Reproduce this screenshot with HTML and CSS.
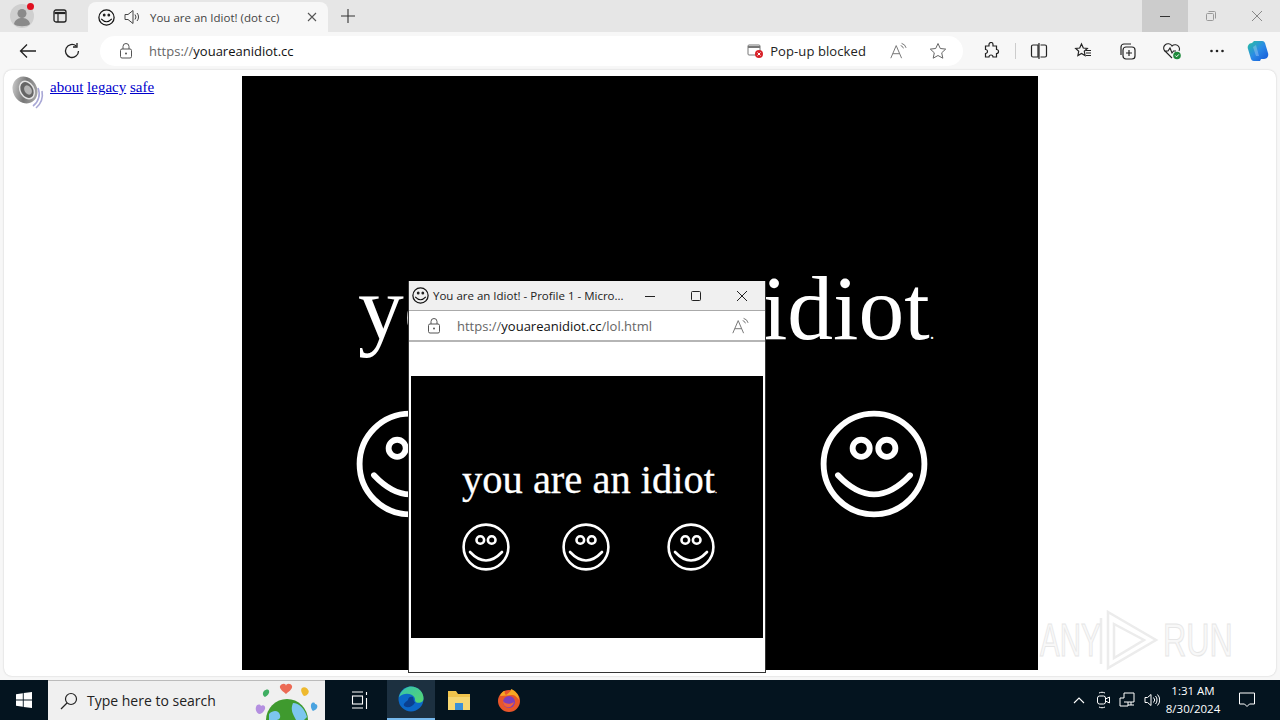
FILE: index.html
```html
<!DOCTYPE html>
<html lang="en">
<head>
	<meta charset="UTF-8">
	<title>You are an Idiot! (dot cc)</title>
	<link rel="stylesheet" href="styles.css">
</head>
<body>
	<svg class="defs" width="0" height="0">
		<symbol id="smile" viewBox="0 0 48 48">
			<g fill="none" stroke="currentColor" stroke-width="2.6" stroke-linecap="round">
				<circle cx="24" cy="24" r="22.4"/>
				<circle cx="18.3" cy="17" r="3.8"/>
				<circle cx="29.7" cy="17" r="3.8"/>
				<path d="M8 29Q24 46 40 29"/>
			</g>
		</symbol>
		<symbol id="smile-small" viewBox="0 0 48 48">
			<circle cx="24" cy="24" r="21.500" fill="none" stroke="#111" stroke-width="3.500"/>
			<ellipse cx="17.500" cy="17" rx="4" ry="4.500" fill="#222"/>
			<ellipse cx="30.500" cy="17" rx="4" ry="4.500" fill="#222"/>
			<path d="M9 28Q24 44 39 28" fill="none" stroke="#111" stroke-width="3.500"/>
		</symbol>
		<symbol id="lock" viewBox="0 0 16 16">
			<g fill="none" stroke="#555" stroke-width="1">
				<rect x="2.5" y="6" width="11" height="9" rx="1.5"/>
				<path d="M5 6V3.5a3 3 0 0 1 6 0V6"/>
			</g>
			<circle cx="8" cy="10.5" r="1" fill="#555"/>
		</symbol>
		<symbol id="read" viewBox="0 0 20 20">
			<g fill="none" stroke="#777" stroke-width="1.1">
				<path d="M2 18L8 4l6 14M4.2 13h7.6"/>
				<path d="M13 4a4 4 0 0 1 3 3M14 1.500a7 7 0 0 1 5 5"/>
			</g>
		</symbol>
	</svg>

	<div class="screen">
		<!-- tab strip -->
		<div class="tabstrip">
			<div class="profile">
				<svg width="24" height="24" viewBox="0 0 24 24"><circle cx="12" cy="12" r="12" fill="#cfcfcf"/><circle cx="12" cy="9.500" r="4.500" fill="#8a8a8a"/><path d="M4 20c1-5 5-6 8-6s7 1 8 6c-2 3-14 3-16 0z" fill="#8a8a8a"/></svg>
				<span class="profile-dot"></span>
			</div>
			<div class="strip-btn">
				<svg width="16" height="16" viewBox="0 0 16 16"><rect x="2" y="2" width="12" height="12" rx="2" fill="none" stroke="#222" stroke-width="1.300"/><path d="M2.500 5h11" stroke="#222" stroke-width="2.200"/><path d="M6 5v9" stroke="#222" stroke-width="1.200"/></svg>
			</div>
			<div class="tab">
				<svg class="tab-smile" width="17" height="17"><use href="#smile-small"/></svg>
				<svg class="tab-sound" width="17" height="16" viewBox="0 0 17 16"><g fill="none" stroke="#444" stroke-width="1"><path d="M1 5.500h3L9 1.500v13l-5-4H1z"/><path d="M11 5.500a4 4 0 0 1 0 5M13 4a6 6 0 0 1 0 8"/></g></svg>
				<span class="tab-title">You are an Idiot! (dot cc)</span>
				<svg class="tab-close" width="10" height="10" viewBox="0 0 10 10"><path d="M1 1l8 8M9 1l-8 8" stroke="#555" stroke-width="1.100"/></svg>
			</div>
			<svg class="newtab" width="16" height="16" viewBox="0 0 16 16"><path d="M8 1v14M1 8h14" stroke="#333" stroke-width="1.100"/></svg>
			<div class="winbtns">
				<div class="winbtn hover"><svg width="10" height="10" viewBox="0 0 10 10"><path d="M0 5.500h10" stroke="#333"/></svg></div>
				<div class="winbtn"><svg width="10" height="10" viewBox="0 0 10 10"><g fill="none" stroke="#999"><rect x=".5" y="2.500" width="7" height="7" rx="1"/><path d="M2.500 .5h6a1 1 0 0 1 1 1v6"/></g></svg></div>
				<div class="winbtn"><svg width="12" height="12" viewBox="0 0 12 12"><path d="M1 1l10 10M11 1L1 11" stroke="#888"/></svg></div>
			</div>
		</div>

		<!-- toolbar -->
		<div class="toolbar">
			<svg class="tool-back" width="18" height="16" viewBox="0 0 18 16"><path d="M17 8H1.500M8 1.500L1.500 8 8 14.500" fill="none" stroke="#222" stroke-width="1.300"/></svg>
			<svg class="tool-reload" width="18" height="18" viewBox="0 0 18 18"><g fill="none" stroke="#222" stroke-width="1.300"><path d="M15.500 9a6.500 6.500 0 1 1-2.200-4.900"/><path d="M14 1v4h-4"/></g></svg>
			<div class="omnibox">
				<svg class="omni-lock" width="16" height="16"><use href="#lock"/></svg>
				<span class="url"><i>https://</i>youareanidiot.cc</span>
				<span class="blocked">
					<svg width="17" height="16" viewBox="0 0 17 16"><rect x="1" y="2" width="12" height="10" rx="1" fill="none" stroke="#777"/><path d="M1 4h12" stroke="#777" stroke-width="2"/><circle cx="12" cy="11" r="4" fill="#d8232a"/><path d="M10.500 9.500l3 3M13.500 9.500l-3 3" stroke="#fff"/></svg>
					Pop-up blocked
				</span>
				<svg class="omni-read" width="18" height="18"><use href="#read"/></svg>
				<svg class="omni-star" width="18" height="18" viewBox="0 0 18 18"><path d="M9 1.500l2.300 5 5.400.6-4 3.700 1.100 5.400L9 13.500l-4.800 2.700 1.100-5.400-4-3.700 5.400-.6z" fill="none" stroke="#666"/></svg>
			</div>
			<div class="tools">
				<svg width="18" height="18" viewBox="0 0 18 18"><path d="M7 2.500a2 2 0 0 1 4 0V4h3.500v3.500a2 2 0 0 1 0 4V15H11a2 2 0 0 0-4 0H3.500v-3.500a2 2 0 0 0 0-4V4H7z" fill="none" stroke="#222" stroke-width="1.200"/></svg>
				<span class="tool-sep"></span>
				<svg width="18" height="18" viewBox="0 0 18 18"><g fill="none" stroke="#222" stroke-width="1.200"><path d="M8 3H3a1.500 1.500 0 0 0-1.500 1.500v9A1.500 1.500 0 0 0 3 15h5zM10.500 3H15a1.500 1.500 0 0 1 1.500 1.500v9A1.500 1.500 0 0 1 15 15h-4.500"/><path d="M9 1v16"/></g></svg>
				<svg width="18" height="18" viewBox="0 0 18 18"><g fill="none" stroke="#222" stroke-width="1.200"><path d="M7.500 2l1.800 4 4 .5-3 2.800.8 4.200-3.600-2-3.600 2 .8-4.200-3-2.800 4-.5z"/><path d="M12 8.500h5M12 11h5M12 13.500h5"/></g></svg>
				<svg width="18" height="18" viewBox="0 0 18 18"><g fill="none" stroke="#222" stroke-width="1.200"><rect x="5" y="5" width="12" height="12" rx="3"/><path d="M3 13V5a3 3 0 0 1 3-3h7M11 8v6M8 11h6"/></g></svg>
				<svg width="20" height="18" viewBox="0 0 20 18"><path d="M10 16L3 9a4 4 0 0 1 0-6 4.500 4.500 0 0 1 7 1 4.500 4.500 0 0 1 7 1 4 4 0 0 1 0 4M2 9h4l2-3 2 5 1.500-2H14" fill="none" stroke="#222" stroke-width="1.100"/><circle cx="15" cy="13.500" r="3.800" fill="#1f8a3b"/><path d="M13.300 13.500l1.300 1.300 2.200-2.400" fill="none" stroke="#fff"/></svg>
				<svg width="18" height="18" viewBox="0 0 18 18"><g fill="#222"><circle cx="3.500" cy="9" r="1.300"/><circle cx="9" cy="9" r="1.300"/><circle cx="14.500" cy="9" r="1.300"/></g></svg>
				<svg class="copilot" width="24" height="24" viewBox="0 0 24 24"><defs><linearGradient id="cop" x1="0" y1="0" x2="1" y2="1"><stop offset="0" stop-color="#29c3a0"/><stop offset=".5" stop-color="#2a8ae6"/><stop offset="1" stop-color="#1456d8"/></linearGradient></defs><path d="M8 2h8a3 3 0 0 1 3 2l3 10c1 3-1 6-4 6h-3l-1 2H8a3 3 0 0 1-3-2L2 10C1 7 3 4 6 4z" fill="url(#cop)"/><path d="M10 6l3 11h-3L7 8z" fill="#fff" opacity=".25"/></svg>
			</div>
		</div>

		<!-- page -->
		<div class="page">
			<div class="corner">
				<svg width="34" height="34" viewBox="0 0 34 34"><defs><linearGradient id="spk" x1="0" y1="0" x2="1" y2="1"><stop offset="0" stop-color="#e4e4e4"/><stop offset=".5" stop-color="#777"/><stop offset="1" stop-color="#bbb"/></linearGradient></defs><g fill="none" stroke="#a9a8d6" stroke-width="1.600"><path d="M26 12a15 15 0 0 1-5 18M30 15a18 18 0 0 1-6 17"/></g><ellipse cx="13" cy="14" rx="12" ry="14" fill="url(#spk)" transform="rotate(-30 13 14)"/><ellipse cx="15" cy="14" rx="7.500" ry="10" fill="#e4e4e4" transform="rotate(-30 15 14)"/><ellipse cx="15" cy="14" rx="6" ry="8.500" fill="#666" transform="rotate(-30 15 14)"/><ellipse cx="16" cy="14" rx="3.500" ry="5" fill="#b5b5b5" transform="rotate(-30 16 14)"/></svg>
				<div class="links"><a href="#">about</a> <a href="#">legacy</a> <a href="#">safe</a></div>
			</div>

			<div class="stage">
				<div class="stage-text">you are an idiot<small>.</small></div>
				<div class="faces">
					<svg width="108" height="108"><use href="#smile"/></svg>
					<svg width="108" height="108"><use href="#smile"/></svg>
					<svg width="108" height="108"><use href="#smile"/></svg>
				</div>
			</div>

			<!-- popup window -->
			<div class="popup">
				<div class="popup-title">
					<svg width="17" height="17"><use href="#smile-small"/></svg>
					<span class="popup-name">You are an Idiot! - Profile 1 - Micro...</span>
					<svg class="popup-min" width="10" height="10" viewBox="0 0 10 10"><path d="M0 5.500h10" stroke="#222"/></svg>
					<svg class="popup-max" width="10" height="10" viewBox="0 0 10 10"><rect x=".5" y=".5" width="9" height="9" rx="1" fill="none" stroke="#222"/></svg>
					<svg class="popup-close" width="12" height="12" viewBox="0 0 12 12"><path d="M1 1l10 10M11 1L1 11" stroke="#222"/></svg>
				</div>
				<div class="popup-addr">
					<svg width="16" height="16"><use href="#lock"/></svg>
					<span class="popup-url"><i>https://</i>youareanidiot.cc<i>/lol.html</i></span>
					<svg class="popup-read" width="18" height="18"><use href="#read"/></svg>
				</div>
				<div class="popup-body">
					<div class="mini">
						<div class="mini-text">you are an idiot<small>.</small></div>
						<div class="mini-faces">
							<svg width="48" height="48"><use href="#smile"/></svg>
							<svg width="48" height="48"><use href="#smile"/></svg>
							<svg width="48" height="48"><use href="#smile"/></svg>
						</div>
					</div>
				</div>
			</div>

			<!-- watermark -->
			<div class="mark">
				<span class="mark-word any">ANY</span>
				<svg width="62" height="64" viewBox="0 0 62 64"><g fill="none" stroke="#ececec" stroke-width="2.500"><path d="M3 10v46M10 4l48 28-48 28z"/><path d="M16 16l30 16-30 18z"/></g></svg>
				<span class="mark-word run">RUN</span>
			</div>
		</div>

		<!-- taskbar -->
		<div class="taskbar">
			<div class="start">
				<svg width="16" height="16" viewBox="0 0 16 16"><path d="M0 2.200L6.800 1.200v6.400H0zM7.700 1.100L16 0v7.600H7.700zM0 8.400h6.800v6.400L0 13.800zM7.700 8.400H16V16l-8.300-1.100z" fill="#fff"/></svg>
			</div>
			<div class="search">
				<svg width="18" height="18" viewBox="0 0 18 18"><g fill="none" stroke="#222" stroke-width="1.200"><circle cx="11" cy="7" r="5.500"/><path d="M7 11l-6 6"/></g></svg>
				<span class="search-text">Type here to search</span>
				<svg class="search-art" width="70" height="39" viewBox="0 0 70 39"><circle cx="32" cy="39" r="21" fill="#3f9a2e"/><path d="M14 33c5-5 10-3 11 1s-2 5-4 5h-7zM38 22c6 0 12 6 14 14l-3 3h-8c-3-6-6-10-3-17z" fill="#7cc6ee"/><path d="M25 5c2-3 6-3 6 0 0-3 5-3 6 0 1 3-4 6-6 8-2-2-7-5-6-8z" fill="#ec6a55"/><path d="M9 10c2-2 5-2 5 0 1 2-2 5-4 6-2-1-3-4-1-6z" fill="#3fae62"/><path d="M47 7c2-2 6 0 6 2 2 1 0 6-4 6-2-2-4-6-2-8z" fill="#eeb92e"/><path d="M1 26c1-3 4-3 5-1 2-2 5 0 4 3-1 3-4 5-6 5-2-1-4-4-3-7z" fill="#b48fe0"/><path d="M57 22c2-1 3 0 3 1 2 0 3 2 2 4s-3 2-4 3c-2-2-3-6-1-8z" fill="#4aa3e0"/></svg>
			</div>
			<div class="task-icon view">
				<svg width="18" height="18" viewBox="0 0 18 18"><g fill="none" stroke="#fff" stroke-width="1.100"><path d="M1 1h11M1 17h11"/><rect x="1.500" y="5" width="10" height="8"/><path d="M15.500 1v3M15.500 7v11"/></g></svg>
			</div>
			<div class="task-icon active">
				<svg width="26" height="26" viewBox="0 0 26 26"><defs><linearGradient id="edge" x1="0" y1="0" x2="1" y2="1"><stop offset="0" stop-color="#35c1b0"/><stop offset="1" stop-color="#57d66e"/></linearGradient></defs><circle cx="13" cy="13" r="12.500" fill="#0c68c8"/><path d="M1 11C3 3 10 .5 13 .5c7 0 12.500 5 12.500 12 0 4-4 5-7 4-2-1-1-3-2-5-2-4-10-6-15.500-.5z" fill="url(#edge)"/><path d="M10 14c0-3 3-4 5-3 1 2 0 4 2 5.500-2 4-7 6-10 4-3-2 0-4 3-6.500z" fill="#0a3f8f"/></svg>
			</div>
			<div class="task-icon">
				<svg width="24" height="22" viewBox="0 0 24 22"><path d="M1 2h8l2 3h12v16H1z" fill="#f0c44c"/><path d="M1 8h22v13H1z" fill="#f6d772"/><path d="M8 14h8v7H8z" fill="#3a90d8"/></svg>
			</div>
			<div class="task-icon fox">
				<svg width="24" height="24" viewBox="0 0 24 24"><circle cx="12" cy="13" r="11" fill="#e8562a"/><path d="M3 8c1-3 3-5 5-5-1 2 0 3 1 4 2-2 5-3 5-6 5 2 8 6 8 11-2-3-4-5-7-5z" fill="#f6a623"/><circle cx="12" cy="14" r="6" fill="#7d3fbb"/><path d="M6 13c2 3 7 4 11 1-1 4-4 6-7 5-2 0-4-3-4-6z" fill="#f0613a"/></svg>
			</div>
			<div class="tray">
				<svg class="tray-up" width="12" height="8" viewBox="0 0 12 8"><path d="M1 7l5-5 5 5" fill="none" stroke="#fff" stroke-width="1.100"/></svg>
				<svg width="14" height="18" viewBox="0 0 14 18"><g fill="none" stroke="#fff"><rect x="1.500" y="5" width="8" height="8" rx="2"/><path d="M9.500 8l4-2v6l-4-2M3 2c2-1 4-1 6 0M3 16c2 1 4 1 6 0"/></g></svg>
				<svg width="16" height="16" viewBox="0 0 16 16"><g fill="none" stroke="#fff"><path d="M5 1h10v9H5M5 1v5H1v8h8v-4"/><path d="M9 13h6M12 10v3"/></g></svg>
				<svg width="16" height="14" viewBox="0 0 16 14"><g fill="none" stroke="#fff"><path d="M1 4.500h2.500L7 1.500v11l-3.500-3H1z"/><path d="M9.500 4.500a3.500 3.500 0 0 1 0 5M11.500 3a6 6 0 0 1 0 8M13.500 1.500a8 8 0 0 1 0 11"/></g></svg>
			</div>
			<div class="clock"><span>1:31 AM</span><span>8/30/2024</span></div>
			<div class="notify">
				<svg width="16" height="16" viewBox="0 0 16 16"><path d="M.5 1h15v11h-5L8 14.500 5.500 12h-5z" fill="none" stroke="#fff"/></svg>
			</div>
		</div>
	</div>
</body>
</html>
```
FILE: styles.css
```css
*{
	padding: 0;
	margin: 0;
	box-sizing: border-box;
}
body{
	width: 1280px;
	height: 720px;
	overflow: hidden;
	font-family: "Open Sans", "Noto Sans", sans-serif;
	background: #f7f7f7;
}
.defs{
	position: absolute;
}
i{
	font-style: normal;
	color: #666;
}
.screen{
	display: flex;
	flex-direction: column;
	height: 720px;
}
/*tab strip*/
.tabstrip{
	display: flex;
	align-items: center;
	height: 32px;
	background: #e6e6e6;
	padding-left: 10px;
}
.profile{
	position: relative;
	width: 24px;
	height: 24px;
}
.profile-dot{
	position: absolute;
	top: -1px;
	right: 0;
	width: 7px;
	height: 7px;
	border-radius: 50%;
	background: #e01020;
}
.strip-btn{
	display: flex;
	margin-left: 18px;
}
.tab{
	display: flex;
	align-items: center;
	width: 240px;
	height: 30px;
	margin: 2px 0 0 20px;
	padding: 0 11px 0 10px;
	background: #f7f7f7;
	border-radius: 8px 8px 0 0;
}
.tab-sound{
	margin-left: 9px;
}
.tab-title{
	margin-left: 9px;
	font-size: 11.5px;
	color: #444;
	white-space: nowrap;
}
.tab-close{
	margin-left: auto;
}
.newtab{
	margin-left: 12px;
}
.winbtns{
	display: flex;
	margin-left: auto;
	height: 32px;
}
.winbtn{
	display: flex;
	align-items: center;
	justify-content: center;
	width: 46px;
}
.winbtn.hover{
	background: #ccc;
}
/*toolbar*/
.toolbar{
	display: flex;
	align-items: center;
	height: 38px;
	padding: 2px 10px 2px 19px;
}
.toolbar > svg{
	flex-shrink: 0;
}
.tool-reload{
	margin-left: 26px;
}
.omnibox{
	display: flex;
	flex-shrink: 0;
	align-items: center;
	width: 863px;
	height: 30px;
	margin-left: 19px;
	padding: 0 16px 0 18px;
	background: #fff;
	border-radius: 15px;
}
.url{
	margin-left: 15px;
	font-size: 13px;
	color: #111;
}
.blocked{
	display: flex;
	align-items: center;
	gap: 6px;
	margin-left: auto;
	font-size: 13px;
	letter-spacing: .1px;
	color: #222;
}
.omni-read{
	margin-left: 23px;
}
.omni-star{
	margin-left: 22px;
}
.tools{
	display: flex;
	align-items: center;
	gap: 26px;
	margin-left: 19px;
}
.tool-sep{
	width: 1px;
	height: 16px;
	margin: 0 -11.5px;
	background: #ccc;
}
.copilot{
	margin-left: -6px;
}
/*page*/
.page{
	position: relative;
	height: 606px;
	margin: 0 4px;
	display: flex;
	background: #fff;
	border-radius: 8px;
	box-shadow: 0 0 2px rgba(0,0,0,.2);
}
.corner{
	display: flex;
	width: 238px;
	padding: 6px 0 0 8px;
}
.links{
	margin: 3px 0 0 4px;
	font-family: "Liberation Serif", serif;
	font-size: 15px;
}
.links a{
	color: #0000cc;
}
.stage{
	width: 796px;
	height: 594px;
	margin-top: 6px;
	padding: 187px 0 0 116px;
	background: #000;
	color: #fff;
	font-family: "Liberation Serif", serif;
}
.stage-text{
	font-size: 91.5px;
	line-height: 1;
	white-space: nowrap;
}
.stage-text small,.mini-text small{
	font-size: 20%;
}
.faces{
	display: flex;
	gap: 124px;
	margin: 55px 0 0 -2px;
}
/*popup window*/
.popup{
	position: absolute;
	left: 404px;
	top: 211px;
	width: 358px;
	height: 392px;
	display: flex;
	flex-direction: column;
	background: #fff;
	border: 1px solid #333;
	border-top: 0;
}
.popup-title{
	display: flex;
	align-items: center;
	height: 30px;
	padding-left: 3px;
	background: #f0f0f0;
	border-bottom: 1px solid #aaa;
	color: #222;
}
.popup-name{
	margin-left: 4px;
	font-size: 11.5px;
	white-space: nowrap;
}
.popup-min{
	margin-left: auto;
}
.popup-max{
	margin-left: 36px;
}
.popup-close{
	margin: 0 17px 0 35px;
}
.popup-addr{
	display: flex;
	align-items: center;
	height: 31px;
	padding: 0 16px 0 17px;
	border-bottom: 2px solid #b5b5b5;
}
.popup-url{
	margin-left: 15px;
	font-size: 13px;
	color: #111;
}
.popup-read{
	margin-left: auto;
}
.popup-body{
	flex: 1;
	padding: 34px 2px 0;
}
.mini{
	height: 262px;
	padding: 84px 0 0 51px;
	background: #000;
	color: #fff;
	font-family: "Liberation Serif", serif;
}
.mini-text{
	font-size: 40.5px;
	line-height: 1;
	white-space: nowrap;
	-webkit-text-stroke: .3px #fff;
}
.mini-faces{
	display: flex;
	gap: 52px;
	margin-top: 22px;
}
.mini-faces svg:last-child{
	margin-left: 5px;
}
/*watermark*/
.mark{
	position: absolute;
	left: 1036px;
	top: 538px;
	display: flex;
	align-items: center;
	height: 64px;
	pointer-events: none;
}
.mark-word{
	display: inline-block;
	width: 58px;
	font-family: "Liberation Sans", sans-serif;
	font-size: 46px;
	color: #f8f8f8;
	-webkit-text-stroke: 1px #e6e6e6;
	transform: scaleX(.64);
	transform-origin: left center;
	white-space: nowrap;
}
.mark-word.run{
	margin-left: 3px;
	transform: scaleX(.7);
}
/*taskbar*/
.taskbar{
	display: flex;
	align-items: stretch;
	height: 40px;
	margin-top: 4px;
	background: #04141f;
	color: #fff;
}
.start{
	display: flex;
	align-items: center;
	justify-content: center;
	width: 48px;
}
.search{
	display: flex;
	align-items: center;
	width: 277px;
	padding-left: 12px;
	overflow: hidden;
	background: #f0f0f0;
	border-top: 1px solid #bbb;
	color: #222;
}
.search-text{
	margin-left: 9px;
	font-size: 14px;
}
.search-art{
	margin-left: auto;
	align-self: flex-end;
}
.task-icon{
	display: flex;
	align-items: center;
	justify-content: center;
	width: 48px;
}
.task-icon.view{
	width: 62px;
	padding-left: 8px;
}
.task-icon.active{
	background: #1c3040;
	border-bottom: 2px solid #76b9ed;
}
.task-icon.fox{
	width: 52px;
}
.tray{
	display: flex;
	align-items: center;
	gap: 9px;
	margin-left: auto;
}
.tray-up{
	margin-right: 2px;
}
.clock{
	display: flex;
	flex-direction: column;
	align-items: center;
	justify-content: center;
	width: 70px;
	margin-left: -2px;
	font-size: 11.5px;
	line-height: 18px;
}
.notify{
	display: flex;
	align-items: center;
	justify-content: center;
	width: 44px;
	margin-left: -3px;
	margin-right: 11px;
}
```
